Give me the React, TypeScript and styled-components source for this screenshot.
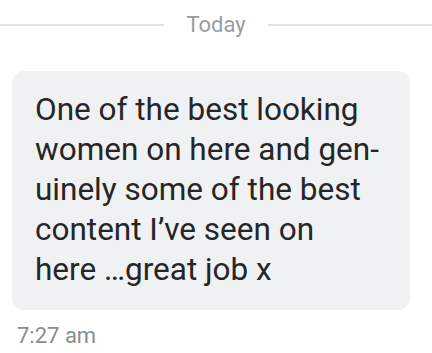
import React from "react";
import styled, { createGlobalStyle } from "styled-components";

const GlobalStyle = createGlobalStyle`
  html, body {
    margin: 0;
    padding: 0;
    background: #ffffff;
  }
  body {
    font-family: Roboto, "Liberation Sans", sans-serif;
  }
`;

const Thread = styled.div`
  width: 432px;
  height: 353px;
  overflow: hidden;
  display: flex;
  flex-direction: column;
`;

const DayDivider = styled.div`
  display: flex;
  align-items: center;
  gap: 22px;
  padding-top: 13px;
`;

const DividerLine = styled.div`
  flex: 1;
  height: 1.5px;
  background: #e4e4e6;
`;

const DayLabel = styled.span`
  font-size: 22px;
  line-height: 24px;
  color: #9a9ca1;
`;

const Bubble = styled.div`
  margin: 34px 0 0 12px;
  width: 398px;
  box-sizing: border-box;
  padding: 19px 16px 20px 23px;
  background: #f0f1f3;
  border-radius: 12px;
  font-size: 31.5px;
  line-height: 40px;
  color: #262626;
`;

const Timestamp = styled.div`
  margin-top: 14px;
  padding-left: 17px;
  font-size: 22px;
  line-height: 24px;
  color: #8b8c90;
`;

const App: React.FC = () => {
  const lines = [
    "One of the best looking",
    "women on here and gen-",
    "uinely some of the best",
    "content I’ve seen on",
    "here …great job x",
  ];

  return (
    <>
      <GlobalStyle />
      <Thread>
        <DayDivider>
          <DividerLine />
          <DayLabel>Today</DayLabel>
          <DividerLine />
        </DayDivider>
        <Bubble>
          {lines.map((line, i) => (
            <React.Fragment key={i}>
              {line}
              {i < lines.length - 1 && <br />}
            </React.Fragment>
          ))}
        </Bubble>
        <Timestamp>7:27 am</Timestamp>
      </Thread>
    </>
  );
};

export default App;
